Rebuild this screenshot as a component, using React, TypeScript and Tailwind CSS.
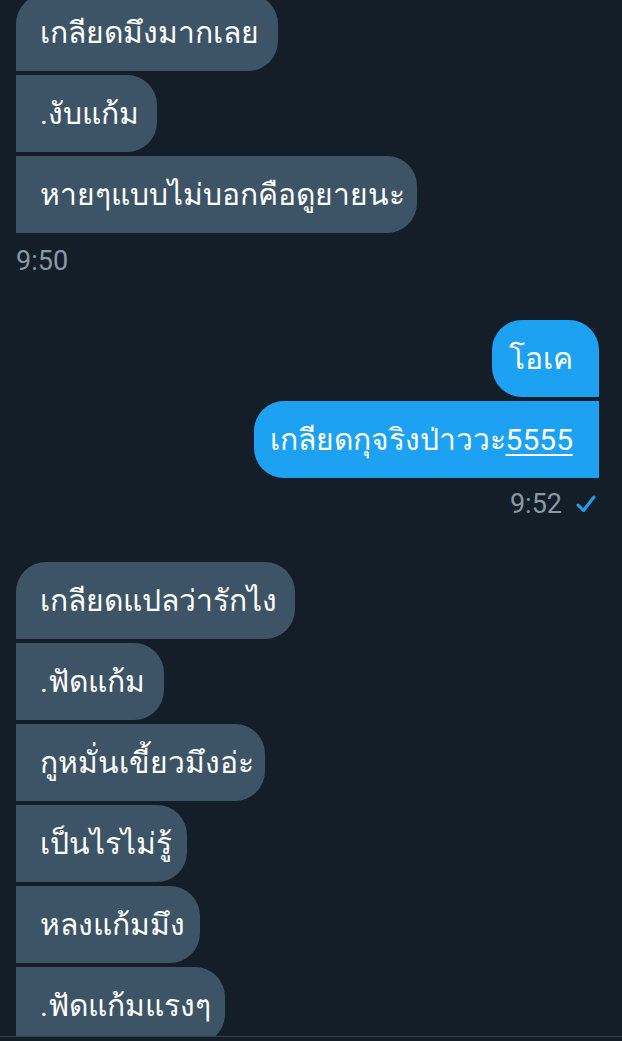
import React from "react";

type Msg = { text: React.ReactNode; w: number; cls: string };

const recv1: Msg[] = [
  { text: "เกลียดมึงมากเลย", w: 262, cls: "rounded-tl-[30px] rounded-r-[30px]" },
  { text: ".งับแก้ม", w: 141, cls: "rounded-r-[30px]" },
  { text: "หายๆแบบไม่บอกคือดูยายนะ", w: 401, cls: "rounded-r-[30px]" },
];

const recv2: Msg[] = [
  { text: "เกลียดแปลว่ารักไง", w: 279, cls: "rounded-tl-[30px] rounded-r-[30px]" },
  { text: ".ฟัดแก้ม", w: 148, cls: "rounded-r-[30px]" },
  { text: "กูหมั่นเขี้ยวมึงอ่ะ", w: 249, cls: "rounded-r-[30px]" },
  { text: "เป็นไรไม่รู้", w: 171, cls: "rounded-r-[30px]" },
  { text: "หลงแก้มมึง", w: 184, cls: "rounded-r-[30px]" },
  { text: ".ฟัดแก้มแรงๆ", w: 209, cls: "rounded-r-[30px]" },
];

function Recv({ m }: { m: Msg }) {
  return (
    <div
      className={`h-[77px] shrink-0 flex items-center pl-6 bg-[#3d5466] text-white text-[30px] leading-[40px] whitespace-nowrap ${m.cls}`}
      style={{ width: m.w }}
    >
      {m.text}
    </div>
  );
}

export default function App() {
  return (
    <div
      className="w-[622px] h-[1041px] overflow-hidden bg-[#141e28] flex flex-col"
      style={{ fontFamily: '"Roboto", "Noto Sans", "DejaVu Sans", sans-serif' }}
    >
      <div className="h-[1036px] shrink-0 overflow-hidden">
        <div className="mt-[-6px] flex flex-col">
          {/* group 1 */}
          <div className="flex flex-col items-start gap-1 pl-4">
            {recv1.map((m, i) => (
              <Recv key={i} m={m} />
            ))}
          </div>
          <div className="pl-4 mt-[11px] text-[27px] leading-[34px] text-[#8899a6]">9:50</div>

          {/* sent */}
          <div className="mt-[42px] flex flex-col items-end gap-1 pr-[23px]">
            <div className="h-[77px] w-[107px] flex items-center justify-end pr-[26px] bg-[#1da1f2] text-white text-[30px] leading-[40px] whitespace-nowrap rounded-l-[30px] rounded-tr-[30px]">
              โอเค
            </div>
            <div className="h-[77px] w-[345px] flex items-center justify-end pr-[26px] bg-[#1da1f2] text-white text-[30px] leading-[40px] whitespace-nowrap rounded-l-[30px]">
              เกลียดกุจริงป่าววะ
              <span className="underline underline-offset-[4px] decoration-2">5555</span>
            </div>
          </div>
          <div className="mt-[9px] pr-[26px] flex items-center justify-end gap-[14px] text-[27px] leading-[34px] text-[#8899a6]">
            <span>9:52</span>
            <svg width="20" height="18" viewBox="0 0 20 18" fill="none">
              <path
                d="M2 10 L7.5 15.5 L18 2"
                stroke="#1da1f2"
                strokeWidth="3"
                strokeLinecap="round"
                strokeLinejoin="round"
              />
            </svg>
          </div>

          {/* group 2 */}
          <div className="mt-[41px] flex flex-col items-start gap-1 pl-4">
            {recv2.map((m, i) => (
              <Recv key={i} m={m} />
            ))}
          </div>
        </div>
      </div>
      <div className="flex-1 border-t border-[#38444d] bg-[#141e28]" />
    </div>
  );
}
